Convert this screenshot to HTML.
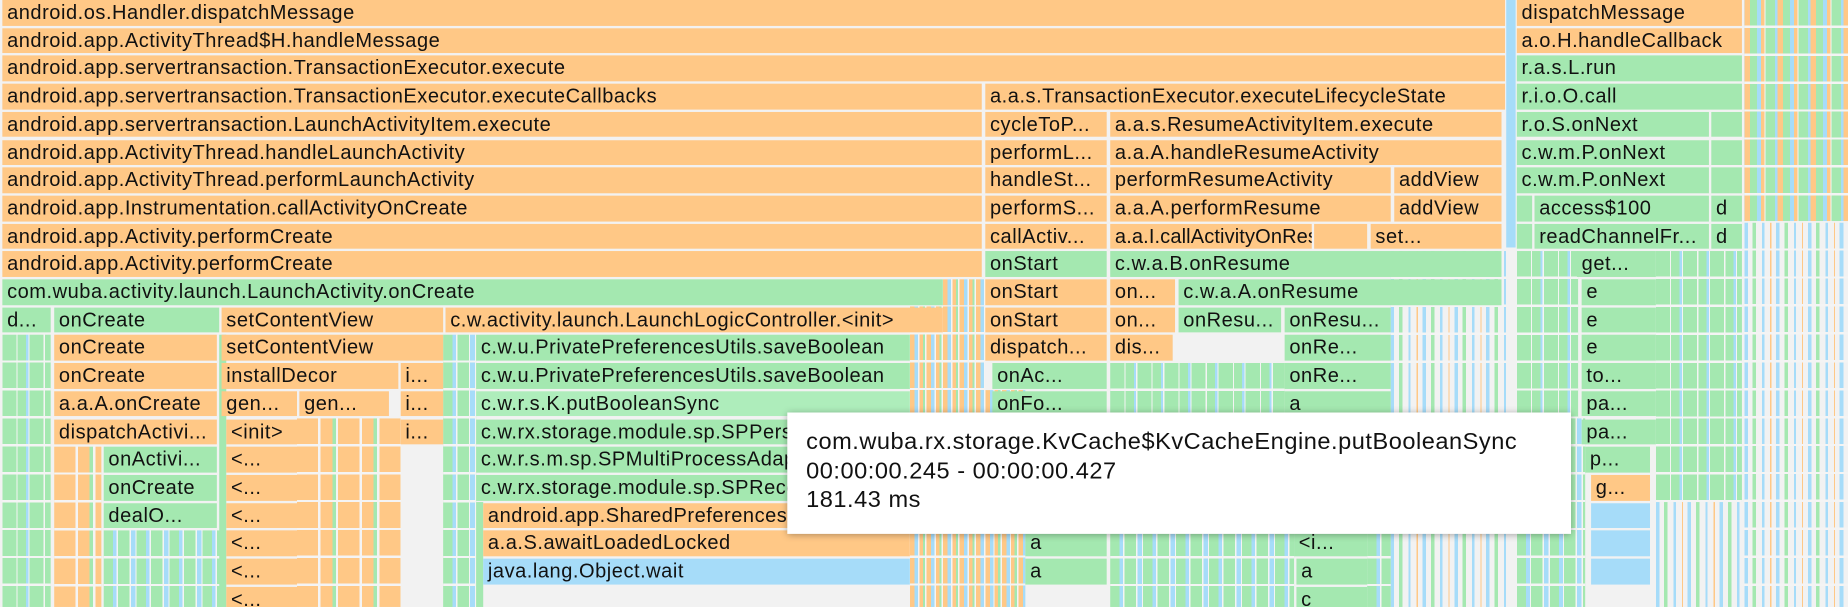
<!DOCTYPE html>
<html><head><meta charset="utf-8">
<style>
html,body{margin:0;padding:0;background:#f2f2f2;overflow:hidden;}
#w{position:absolute;left:0;top:0;width:1568px;height:515px;transform:scale(1.17857);transform-origin:0 0;background:#f2f2f2;overflow:hidden;
font-family:"Liberation Sans",sans-serif;}
.c{position:absolute;height:21.7px;line-height:22px;font-size:17px;letter-spacing:0.45px;color:#111;padding-left:4px;box-sizing:border-box;white-space:nowrap;overflow:hidden;}
.o{background:#ffc886;}
.g{background:#a4e8b0;}
.b{background:#a6dcf9;}
.t{position:absolute;}
.r0{top:0}.r1{top:23.7px}.r2{top:47.4px}.r3{top:71.1px}.r4{top:94.8px}.r5{top:118.5px}.r6{top:142.2px}.r7{top:165.9px}.r8{top:189.6px}.r9{top:213.3px}.r10{top:237px}.r11{top:260.7px}.r12{top:284.4px}.r13{top:308.1px}.r14{top:331.8px}.r15{top:355.5px}.r16{top:379.2px}.r17{top:402.9px}.r18{top:426.6px}.r19{top:450.3px}.r20{top:474px}.r21{top:497.7px}
.gap{background-image:repeating-linear-gradient(180deg,transparent 0 21.7px,#f4f4f4 21.7px 23.7px);position:absolute;inset:0;}
.s1{background:repeating-linear-gradient(90deg,#ffc886 0 5px,#a4e8b0 5px 11px,#a6dcf9 11px 14px,#ffc886 14px 17px,#f4f4f4 17px 18px,#a4e8b0 18px 26px,#a6dcf9 26px 28px);}
.s2{background:repeating-linear-gradient(90deg,#a6dcf9 0 3px,#f2f2f2 3px 7px,#a4e8b0 7px 10px,#f2f2f2 10px 15px,#a6dcf9 15px 17px,#f2f2f2 17px 22px,#ffc886 22px 23px,#f2f2f2 23px 27px);}
.s3{background:repeating-linear-gradient(90deg,#a4e8b0 0 12px,#f4f4f4 12px 13px,#a4e8b0 13px 20px,#a6dcf9 20px 22px,#f4f4f4 22px 23px);}
.s4{background:repeating-linear-gradient(90deg,#ffc886 0 4px,#a6dcf9 4px 7px,#f4f4f4 7px 8px,#ffc886 8px 11px,#a4e8b0 11px 13px,#f4f4f4 13px 14px);}
.s5{background:repeating-linear-gradient(90deg,#a4e8b0 0 8px,#a6dcf9 8px 11px,#f4f4f4 11px 12px,#a4e8b0 12px 22px,#f4f4f4 22px 23px,#a6dcf9 23px 27px,#f4f4f4 27px 28px);}
.s6{background:repeating-linear-gradient(90deg,#ffc886 0 18px,#f4f4f4 18px 20px,#ffc886 20px 30px,#a4e8b0 30px 33px,#f4f4f4 33px 35px);}
#tip{position:absolute;left:668px;top:350px;width:665px;height:103px;background:#fff;box-shadow:0 1px 6px rgba(0,0,0,0.35);font-size:20px;line-height:24.5px;color:#111;padding:13px 0 0 16px;box-sizing:border-box;letter-spacing:0.45px;white-space:nowrap;}
</style></head><body><div id="w">

<div class="t s1" style="left:1480px;top:0;width:88px;height:188px"><div class="gap"></div></div>
<div class="t s2" style="left:1480px;top:189px;width:88px;height:326px"><div class="gap"></div></div>
<div class="t s3" style="left:1405px;top:213px;width:73px;height:213px"><div class="gap"></div></div>
<div class="t s2" style="left:1405px;top:426px;width:73px;height:89px"></div>
<div class="t s3" style="left:1287px;top:213px;width:52px;height:142px"><div class="gap"></div></div>
<div class="t s5" style="left:1287px;top:355px;width:58px;height:160px"><div class="gap"></div></div>
<div class="t b" style="left:1278px;top:0;width:8px;height:210px"></div>
<div class="t s2" style="left:1180px;top:213px;width:98px;height:95px"><div class="gap"></div></div>
<div class="t s2" style="left:1180px;top:308px;width:100px;height:207px"></div>
<div class="t s3" style="left:942px;top:308px;width:148px;height:142px"><div class="gap"></div></div>
<div class="t s5" style="left:942px;top:450px;width:156px;height:65px"><div class="gap"></div></div>
<div class="t s5" style="left:1160px;top:450px;width:20px;height:65px"><div class="gap"></div></div>
<div class="t s4" style="left:836px;top:331px;width:34px;height:184px"><div class="gap"></div></div>
<div class="t s4" style="left:772px;top:260px;width:64px;height:255px"><div class="gap"></div></div>
<div class="t s4" style="left:800px;top:237px;width:36px;height:22px"></div>
<div class="t s5" style="left:376px;top:284px;width:28px;height:231px"><div class="gap"></div></div>
<div class="t s6" style="left:252px;top:355px;width:88px;height:160px"><div class="gap"></div></div>
<div class="t s3" style="left:2px;top:284px;width:41px;height:231px"><div class="gap"></div></div>
<div class="t s6" style="left:46px;top:379px;width:40px;height:136px"><div class="gap"></div></div>
<div class="t s5" style="left:404px;top:426px;width:6px;height:89px"></div>
<div class="t s5" style="left:88px;top:450px;width:100px;height:65px"><div class="gap"></div></div>
<div class="t s5" style="left:186px;top:284px;width:6px;height:231px"></div>

<div class="c o r0" style="left:2px;width:1275px">android.os.Handler.dispatchMessage</div>
<div class="c o r0" style="left:1287px;width:191px">dispatchMessage</div>
<div class="c o r1" style="left:2px;width:1275px">android.app.ActivityThread$H.handleMessage</div>
<div class="c o r1" style="left:1287px;width:191px">a.o.H.handleCallback</div>
<div class="c o r2" style="left:2px;width:1275px">android.app.servertransaction.TransactionExecutor.execute</div>
<div class="c g r2" style="left:1287px;width:191px">r.a.s.L.run</div>
<div class="c o r3" style="left:2px;width:831px">android.app.servertransaction.TransactionExecutor.executeCallbacks</div>
<div class="c o r3" style="left:836px;width:441px">a.a.s.TransactionExecutor.executeLifecycleState</div>
<div class="c g r3" style="left:1287px;width:191px">r.i.o.O.call</div>
<div class="c o r4" style="left:2px;width:831px">android.app.servertransaction.LaunchActivityItem.execute</div>
<div class="c o r4" style="left:836px;width:103px">cycleToP...</div>
<div class="c o r4" style="left:942px;width:332px">a.a.s.ResumeActivityItem.execute</div>
<div class="c g r4" style="left:1287px;width:163px">r.o.S.onNext</div>
<div class="c g r4" style="left:1452px;width:26px"></div>
<div class="c o r5" style="left:2px;width:831px">android.app.ActivityThread.handleLaunchActivity</div>
<div class="c o r5" style="left:836px;width:103px">performL...</div>
<div class="c o r5" style="left:942px;width:332px">a.a.A.handleResumeActivity</div>
<div class="c g r5" style="left:1287px;width:163px">c.w.m.P.onNext</div>
<div class="c g r5" style="left:1452px;width:26px"></div>
<div class="c o r6" style="left:2px;width:831px">android.app.ActivityThread.performLaunchActivity</div>
<div class="c o r6" style="left:836px;width:103px">handleSt...</div>
<div class="c o r6" style="left:942px;width:238px">performResumeActivity</div>
<div class="c o r6" style="left:1183px;width:91px">addView</div>
<div class="c g r6" style="left:1287px;width:163px">c.w.m.P.onNext</div>
<div class="c g r6" style="left:1452px;width:26px"></div>
<div class="c o r7" style="left:2px;width:831px">android.app.Instrumentation.callActivityOnCreate</div>
<div class="c o r7" style="left:836px;width:103px">performS...</div>
<div class="c o r7" style="left:942px;width:238px">a.a.A.performResume</div>
<div class="c o r7" style="left:1183px;width:91px">addView</div>
<div class="c g r7" style="left:1287px;width:13px"></div>
<div class="c g r7" style="left:1302px;width:148px">access$100</div>
<div class="c g r7" style="left:1452px;width:26px">d</div>
<div class="c o r8" style="left:2px;width:831px">android.app.Activity.performCreate</div>
<div class="c o r8" style="left:836px;width:103px">callActiv...</div>
<div class="c o r8" style="left:942px;width:171px;letter-spacing:0.1px">a.a.I.callActivityOnResume</div>
<div class="c o r8" style="left:1115px;width:45px"></div>
<div class="c o r8" style="left:1163px;width:111px">set...</div>
<div class="c g r8" style="left:1287px;width:13px"></div>
<div class="c g r8" style="left:1302px;width:148px">readChannelFr...</div>
<div class="c g r8" style="left:1452px;width:26px">d</div>
<div class="c o r9" style="left:2px;width:831px">android.app.Activity.performCreate</div>
<div class="c g r9" style="left:836px;width:103px">onStart</div>
<div class="c g r9" style="left:942px;width:332px">c.w.a.B.onResume</div>
<div class="c g r9" style="left:1338px;width:67px">get...</div>
<div class="c g r10" style="left:2px;width:798px">com.wuba.activity.launch.LaunchActivity.onCreate</div>
<div class="c o r10" style="left:836px;width:103px">onStart</div>
<div class="c o r10" style="left:942px;width:55px">on...</div>
<div class="c g r10" style="left:1000px;width:274px">c.w.a.A.onResume</div>
<div class="c g r10" style="left:1342px;width:63px">e</div>
<div class="c g r11" style="left:2px;width:41px">d...</div>
<div class="c g r11" style="left:46px;width:140px">onCreate</div>
<div class="c o r11" style="left:188px;width:188px">setContentView</div>
<div class="c o r11" style="left:378px;width:422px">c.w.activity.launch.LaunchLogicController.&lt;init&gt;</div>
<div class="c o r11" style="left:836px;width:103px">onStart</div>
<div class="c o r11" style="left:942px;width:55px">on...</div>
<div class="c g r11" style="left:1000px;width:87px">onResu...</div>
<div class="c g r11" style="left:1090px;width:90px">onResu...</div>
<div class="c g r11" style="left:1342px;width:63px">e</div>
<div class="c o r12" style="left:46px;width:138px">onCreate</div>
<div class="c o r12" style="left:188px;width:188px">setContentView</div>
<div class="c g r12" style="left:404px;width:368px">c.w.u.PrivatePreferencesUtils.saveBoolean</div>
<div class="c o r12" style="left:836px;width:103px">dispatch...</div>
<div class="c o r12" style="left:942px;width:53px">dis...</div>
<div class="c g r12" style="left:1090px;width:90px">onRe...</div>
<div class="c g r12" style="left:1342px;width:63px">e</div>
<div class="c o r13" style="left:46px;width:138px">onCreate</div>
<div class="c o r13" style="left:188px;width:150px">installDecor</div>
<div class="c o r13" style="left:340px;width:36px">i...</div>
<div class="c g r13" style="left:404px;width:368px">c.w.u.PrivatePreferencesUtils.saveBoolean</div>
<div class="c g r13" style="left:842px;width:97px">onAc...</div>
<div class="c g r13" style="left:1090px;width:90px">onRe...</div>
<div class="c g r13" style="left:1342px;width:63px">to...</div>
<div class="c o r14" style="left:46px;width:138px">a.a.A.onCreate</div>
<div class="c o r14" style="left:188px;width:64px">gen...</div>
<div class="c o r14" style="left:254px;width:76px">gen...</div>
<div class="c o r14" style="left:340px;width:36px">i...</div>
<div class="c g r14" style="left:404px;width:368px;background:#aeedbb">c.w.r.s.K.putBooleanSync</div>
<div class="c g r14" style="left:842px;width:97px">onFo...</div>
<div class="c g r14" style="left:1090px;width:90px">a</div>
<div class="c g r14" style="left:1342px;width:63px">pa...</div>
<div class="c o r15" style="left:46px;width:138px">dispatchActivi...</div>
<div class="c o r15" style="left:192px;width:60px">&lt;init&gt;</div>
<div class="c o r15" style="left:340px;width:36px">i...</div>
<div class="c g r15" style="left:404px;width:368px">c.w.rx.storage.module.sp.SPPersistence</div>
<div class="c g r15" style="left:1342px;width:63px">pa...</div>
<div class="c g r16" style="left:88px;width:96px">onActivi...</div>
<div class="c o r16" style="left:192px;width:60px">&lt;...</div>
<div class="c g r16" style="left:404px;width:368px">c.w.r.s.m.sp.SPMultiProcessAdapter</div>
<div class="c g r16" style="left:1345px;width:55px">p...</div>
<div class="c g r17" style="left:88px;width:96px">onCreate</div>
<div class="c o r17" style="left:192px;width:60px">&lt;...</div>
<div class="c g r17" style="left:404px;width:368px">c.w.rx.storage.module.sp.SPRecord</div>
<div class="c o r17" style="left:1350px;width:50px">g...</div>
<div class="c g r18" style="left:88px;width:96px">dealO...</div>
<div class="c o r18" style="left:192px;width:60px">&lt;...</div>
<div class="c o r18" style="left:410px;width:362px">android.app.SharedPreferencesImpl</div>
<div class="c b r18" style="left:1350px;width:50px"></div>
<div class="c o r19" style="left:192px;width:60px">&lt;...</div>
<div class="c o r19" style="left:410px;width:362px">a.a.S.awaitLoadedLocked</div>
<div class="c g r19" style="left:870px;width:69px">a</div>
<div class="c g r19" style="left:1098px;width:62px">&lt;i...</div>
<div class="c b r19" style="left:1350px;width:50px"></div>
<div class="c o r20" style="left:192px;width:60px">&lt;...</div>
<div class="c b r20" style="left:410px;width:362px">java.lang.Object.wait</div>
<div class="c g r20" style="left:870px;width:69px">a</div>
<div class="c g r20" style="left:1100px;width:60px">a</div>
<div class="c b r20" style="left:1350px;width:50px"></div>
<div class="c o r21" style="left:192px;width:60px">&lt;...</div>
<div class="c g r21" style="left:1100px;width:60px">c</div>

<div id="tip">com.wuba.rx.storage.KvCache$KvCacheEngine.putBooleanSync<br>00:00:00.245 - 00:00:00.427<br>181.43 ms</div>
</div></body></html>
